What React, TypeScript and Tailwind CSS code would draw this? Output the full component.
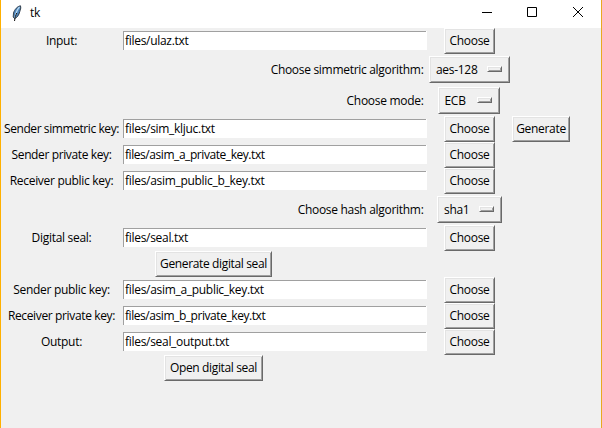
import type { ReactNode } from "react";

const raised =
  "relative flex shrink-0 items-center border border-t-white border-l-white border-r-[#696969] border-b-[#696969] shadow-[inset_1px_1px_0_#e3e3e3,inset_-1px_-1px_0_#a0a0a0] bg-[#f0f0f0] whitespace-nowrap";

function Button({ size, children }: { size: string; children: ReactNode }) {
  return <button className={`${raised} h-[26px] justify-center ${size}`}>{children}</button>;
}

function Entry({ value, tracking }: { value: string; tracking: string }) {
  return (
    <div className="mb-px mr-px flex h-[19px] w-[303px] items-center border-t border-l border-[#a0a0a0] bg-white pl-px whitespace-nowrap shadow-[1px_0_0_#fff]">
      <span className={tracking}>{value}</span>
    </div>
  );
}

type FileRowProps = {
  label: string;
  value: string;
  extra?: ReactNode;
  labelTracking?: string;
  tracking?: string;
};

function FileRow({ label, value, extra, labelTracking = "", tracking = "tracking-[-0.3px]" }: FileRowProps) {
  return (
    <div className="flex h-[26px] items-center">
      <span className={`w-[122px] pr-px text-center whitespace-nowrap ${labelTracking}`}>{label}</span>
      <Entry value={value} tracking={tracking} />
      <div className="flex w-[85px] justify-center">
        <Button size="w-[51px]">Choose</Button>
      </div>
      {extra}
    </div>
  );
}

function OptionRow({ label, value, size }: { label: string; value: string; size: string }) {
  return (
    <div className="flex h-[31px] items-center">
      <span className="w-[426px] pr-[3.5px] text-right whitespace-nowrap">{label}</span>
      <div className="flex w-[85px] justify-center">
        <button className={`${raised} h-[27px] justify-between pl-1.5 pr-[7px] ${size}`}>
          <span>{value}</span>
          <span className="mb-px h-[6px] w-[15px] border border-t-white border-l-white border-r-[#696969] border-b-[#696969] shadow-[inset_1px_1px_0_#e3e3e3,inset_-1px_-1px_0_#a0a0a0]" />
        </button>
      </div>
    </div>
  );
}

function Feather() {
  return (
    <svg width="10" height="17" viewBox="0 0 10 17">
      <path d="M8.5.8C5.5 1.2 2.5 4.5 1.5 8L1.2 12l1.3 1.5C5 13 7 10 7.8 6.5L8.8 3z" fill="#4d86bd" stroke="#28323d" strokeWidth=".9" />
      <path d="M7.5 2C5 4.5 3.8 8 3 13" fill="none" stroke="#b7d8f0" strokeWidth="1.3" />
      <path d="M4.8 8C3.8 10 3 12.5 2.5 16" fill="none" stroke="#111" strokeWidth="1" />
    </svg>
  );
}

export default function App() {
  return (
    <div className="h-[428px] w-[602px] overflow-hidden border-r border-l border-r-[#e8a920] border-l-[#ffb000] bg-[#f0f0f0] font-['Open_Sans','Noto_Sans',sans-serif] text-[12px] leading-4 tracking-[-0.3px] text-black">
      <header className="flex h-7 items-center bg-white pb-[2px] pl-[11px]">
        <Feather />
        <span className="ml-2">tk</span>
        <svg className="mt-0.5 ml-auto shrink-0" width="120" height="28" viewBox="0 0 120 28" fill="none" stroke="#000">
          <path d="M1 12.5h10M46.5 7.5h9v9h-9zM92 7l10 10M102 7l-10 10" />
        </svg>
      </header>
      <main>
        <FileRow label="Input:" value="files/ulaz.txt" />
        <OptionRow label="Choose simmetric algorithm:" value="aes-128" size="w-[81px]" />
        <OptionRow label="Choose mode:" value="ECB" size="w-[62px] -left-px" />
        <FileRow
          label="Sender simmetric key:"
          labelTracking="tracking-[-0.42px]"
          value="files/sim_kljuc.txt"
          extra={<Button size="w-[58px]">Generate</Button>}
        />
        <FileRow label="Sender private key:" value="files/asim_a_private_key.txt" labelTracking="tracking-[-0.38px]" tracking="tracking-[-0.44px]" />
        <FileRow label="Receiver public key:" value="files/asim_public_b_key.txt" />
        <OptionRow label="Choose hash algorithm:" value="sha1" size="w-[65px]" />
        <FileRow label="Digital seal:" value="files/seal.txt" />
        <div className="flex w-[425px] justify-center">
          <Button size="w-[117px] tracking-[-0.36px]">Generate digital seal</Button>
        </div>
        <FileRow label="Sender public key:" value="files/asim_a_public_key.txt" />
        <FileRow label="Receiver private key:" value="files/asim_b_private_key.txt" labelTracking="tracking-[-0.36px]" tracking="tracking-[-0.44px]" />
        <FileRow label="Output:" value="files/seal_output.txt" />
        <div className="flex w-[425px] justify-center">
          <Button size="w-[99px] tracking-[-0.36px]">Open digital seal</Button>
        </div>
      </main>
    </div>
  );
}
